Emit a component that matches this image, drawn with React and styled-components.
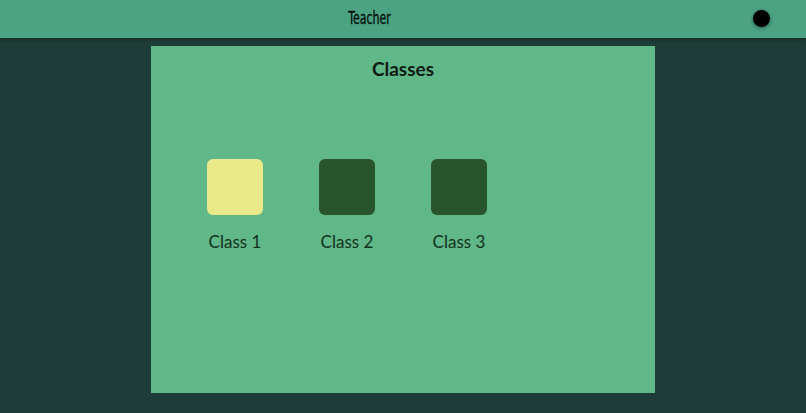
import React from "react";
import styled, { createGlobalStyle } from "styled-components";

const Global = createGlobalStyle`
  html, body { margin: 0; padding: 0; background: #1f3d38; }
  body { font-family: "Lato", "Noto Sans", sans-serif; }
`;

const Page = styled.div`
  width: 806px;
  height: 413px;
  background: #1f3d38;
  border-radius: 0 0 6px 6px;
  overflow: hidden;
  display: flex;
  flex-direction: column;
`;

const Header = styled.header`
  position: relative;
  height: 38px;
  flex: none;
  background: #4ca384;
  display: flex;
  align-items: center;
  justify-content: center;
  padding-right: 66px;
  box-sizing: border-box;
  box-shadow: 0 2px 3px rgba(0, 0, 0, 0.25);
  z-index: 1;
`;

const HeaderTitle = styled.span`
  display: inline-block;
  font-family: "DejaVu Sans Condensed", "DejaVu Sans", sans-serif;
  font-size: 17px;
  line-height: 18px;
  color: #050f0a;
  -webkit-text-stroke: 0.3px #050f0a;
  transform: scaleX(0.72);
  margin-top: -3px;
`;

const Avatar = styled.div`
  position: absolute;
  right: 36px;
  top: 10px;
  width: 17px;
  height: 17px;
  border-radius: 50%;
  background: #000;
  box-shadow: 0 1px 4px rgba(0, 0, 0, 0.45);
`;

const Main = styled.main`
  flex: 1;
  display: flex;
  justify-content: center;
  padding-top: 8px;
`;

const Panel = styled.section`
  width: 504px;
  height: 347px;
  background: #60b888;
  display: flex;
  flex-direction: column;
  align-items: center;
`;

const Title = styled.h1`
  margin: 12px 0 0;
  font-size: 19px;
  font-weight: 700;
  color: #0e1a13;
  line-height: 22px;
`;

const ClassRow = styled.div`
  align-self: flex-start;
  margin: 79px 0 0 35px;
  display: flex;
  gap: 14px;
`;

const ClassItem = styled.div`
  width: 98px;
  display: flex;
  flex-direction: column;
  align-items: center;
`;

const Tile = styled.div`
  width: 56px;
  height: 56px;
  border-radius: 6px;
  background: ${(p) => (p.$active ? "#eae98a" : "#29552c")};
`;

const Label = styled.span`
  margin-top: 17px;
  font-size: 17px;
  color: #143020;
  line-height: 20px;
`;

const classes = [
  { name: "Class 1", active: true },
  { name: "Class 2" },
  { name: "Class 3" },
];

export default function App() {
  return (
    <>
      <Global />
      <Page>
        <Header>
          <HeaderTitle>Teacher</HeaderTitle>
          <Avatar />
        </Header>
        <Main>
          <Panel>
            <Title>Classes</Title>
            <ClassRow>
              {classes.map((c) => (
                <ClassItem key={c.name}>
                  <Tile $active={c.active} />
                  <Label>{c.name}</Label>
                </ClassItem>
              ))}
            </ClassRow>
          </Panel>
        </Main>
      </Page>
    </>
  );
}
